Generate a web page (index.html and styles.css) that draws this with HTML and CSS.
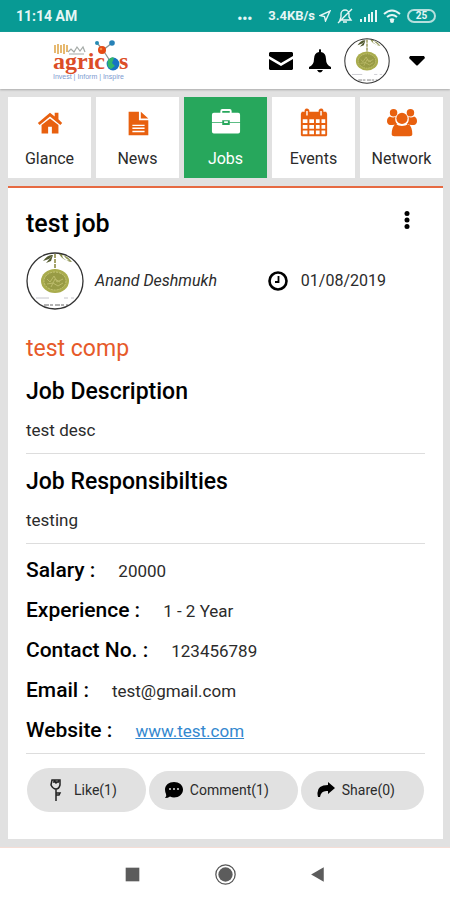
FILE: index.html
```html
<!DOCTYPE html>
<html lang="en">
<head>
<meta charset="utf-8">
<meta name="viewport" content="width=device-width, initial-scale=1">
<title>Agricos - Jobs</title>
<link rel="stylesheet" href="styles.css">
</head>
<body>
<svg class="defs" aria-hidden="true">
  <symbol id="pendant" viewBox="0 0 58 58">
    <clipPath id="round"><circle cx="29" cy="29" r="28"/></clipPath>
    <circle cx="29" cy="29" r="28" fill="#fff"/>
    <g clip-path="url(#round)">
      <path d="M17 9 Q22 2 27 3 L23 7Z M20 11 L27 3 25 9Z" fill="#535a31"/>
      <path d="M33 2 Q38 10 44 8 Q40 8 37 2Z M36 3 Q42 4 46 10 Q42 10 37 6Z" fill="#8b914e"/>
      <path d="M29 2 V18" stroke="#a4a269" stroke-width="2" stroke-dasharray="4 1"/>
      <ellipse cx="29" cy="29" rx="14" ry="12" fill="#a9ac4d"/>
      <ellipse cx="29" cy="29" rx="11" ry="9" fill="#989b45" stroke="#c4c577" stroke-dasharray="2 1"/>
      <path d="M21 27l3 3 4-6 3 6 6-3M21 32l6-1 5 3 5-3M25 35l4-8 5 3" fill="none" stroke="#bdbc6d"/>
      <path d="M10 46h13M38 46h4M45 46h3" stroke="#c4c4ca"/>
      <path d="M18 53h24" stroke="#666" stroke-dasharray="5 1 3 2"/>
    </g>
    <circle cx="29" cy="29" r="28" fill="none" stroke="#333" stroke-width="1.3"/>
  </symbol>
</svg>

<div class="status">
  <span class="clock">11:14 AM</span>
  <span class="dots">•••</span>
  <span class="speed">3.4KB/s</span>
  <svg class="s-loc" viewBox="0 0 12 12"><path d="M11 1 6.5 11 5.5 6.5 1 5.5Z"/></svg>
  <svg class="s-mute" viewBox="0 0 16 16"><path d="M3 12h11l-2-3V6a4 4 0 0 0-8 0v3ZM6 14h4M15 1 1 15"/></svg>
  <svg class="s-signal" viewBox="0 0 18 14"><path d="M1 10h2v3H1zM5 8h2v5H5zM9 5h2v8H9zM12 3h2v10h-2zM16 1h2v12h-2z"/></svg>
  <svg class="s-wifi" viewBox="0 0 18 14"><path d="M1 5Q9-2 17 5M4 8q5-4 10 0M7 11q2-1.5 4 0"/><circle cx="9" cy="12" r="1"/></svg>
  <span class="battery">25</span>
</div>

<header class="top">
  <a class="logo" href="#" aria-label="Agricos">
    <svg viewBox="0 0 76 42">
      <g fill="none" stroke="#e0a94e" stroke-width="1.6"><path d="M2 5v8M5 4v10M8 5v8M11 4v10M14 5v7"/></g>
      <path d="M15 12l3-3 3 3 3-5 3 4 3-4 2 5M16 14h15" fill="none" stroke="#a5aaa7" stroke-width="1.2"/>
      <path d="M44 3l6 7 9-7M50 10l9 14" fill="none" stroke="#8b9694" stroke-width="1.3"/>
      <circle cx="44" cy="3" r="2" fill="#258bb4"/><circle cx="59" cy="3" r="2.8" fill="#2681b7"/>
      <circle cx="49" cy="10" r="4" fill="#e64a13"/><circle cx="48" cy="9" r="1.3" fill="#f3914a"/>
      <text class="word" x="0" y="29">agric</text>
      <text class="word" x="66" y="29">s</text>
      <circle cx="60" cy="24" r="6.4" fill="#1673c3"/>
      <path d="M55 20q4-4 6-2l-2 5 3 3-4 3q-5-2-3-9Z" fill="#32b66b"/>
      <text class="tag" x="0" y="39">Invest | Inform | Inspire</text>
    </svg>
  </a>
  <div class="tools">
    <button aria-label="Messages"><svg class="mail" viewBox="0 0 24 18"><path d="M1 0h22l1 1v3L12 11 0 4V1Zm-1 7 12 7 12-7v10l-1 1H1l-1-1Z"/></svg></button>
    <button aria-label="Notifications"><svg class="bell" viewBox="0 0 22 24"><path d="M10 1q1-2 2 0v2q5 1 5 7 0 6 5 8v2H0v-2q5-2 5-8 0-6 5-7ZM8 21h6q-3 5-6 0Z"/></svg></button>
    <button aria-label="Profile"><svg class="face" viewBox="0 0 58 58"><use href="#pendant"/></svg></button>
    <button aria-label="Account menu"><svg class="caret" viewBox="0 0 16 10"><path d="M1 0h14l1 2-7 7q-1 1-2 0L0 2Z"/></svg></button>
  </div>
</header>

<main>
  <nav class="tabs">
    <a href="#"><svg viewBox="0 0 32 32"><path d="M16 4 3 15l2 2L16 8l11 9 2-2-4-4V4h-4v4ZM16 10 7 17v9h7v-7h4v7h7v-9Z"/></svg>Glance</a>
    <a href="#"><svg viewBox="0 0 32 32"><path d="M6 3h11v9h10v16H6ZM19 3l8 7h-8Z"/><path d="M10 17.500h13M10 20.500h13M10 24h13" stroke="#fff" stroke-width="1.500"/></svg>News</a>
    <a href="#" class="on" aria-current="page"><svg viewBox="0 0 32 32"><path fill-rule="evenodd" d="M3 4h7V2q0-2 2-2h8q2 0 2 2v2h7q2 0 2 2v8H20v-2h-8v2H1V6q0-2 2-2Zm9 0h8V2h-8ZM1 15h11v2h8v-2h11v9q0 2-2 2H3q-2 0-2-2ZM14 13h4v2h-4Z"/></svg>Jobs</a>
    <a href="#"><svg viewBox="0 0 32 32"><path fill-rule="evenodd" d="M3 3h3V1q2-3 5 0v2h10V1q3-3 5 0v2h3l1 2v23l-1 1H3l-1-1V5ZM4 11v4h5v-4Zm7 0v4h5v-4Zm7 0v4h4v-4Zm6 0v4h4v-4ZM4 17v4h5v-4Zm7 0v4h5v-4Zm7 0v4h4v-4Zm6 0v4h4v-4ZM4 23v4h5v-4Zm7 0v4h5v-4Zm7 0v4h4v-4Zm6 0v4h4v-4Z"/><path d="M8.500 2v5M23.500 2v5" stroke="#fff" stroke-width="1.500"/></svg>Events</a>
    <a href="#"><svg viewBox="0 0 32 32"><circle cx="7" cy="4" r="4"/><circle cx="25" cy="4" r="4"/><circle cx="16" cy="10" r="6"/><path d="M3 8q4 2 6 0-1 6 2 8-2 1-8 1-3-1-3-4 0-4 3-5ZM29 8q-4 2-6 0 1 6-2 8 2 1 8 1 3-1 3-4 0-4-3-5ZM9 16q7 4 14 0 4 3 4 11 0 2-3 2H8q-3 0-3-2 0-8 4-11Z"/></svg>Network</a>
  </nav>

  <article class="card">
    <div class="head">
      <h1>test job</h1>
      <button class="more" aria-label="More options"><svg viewBox="0 0 6 20"><circle cx="3" cy="3.500" r="2.500"/><circle cx="3" cy="10" r="2.500"/><circle cx="3" cy="16.500" r="2.500"/></svg></button>
    </div>
    <div class="by">
      <svg class="avatar" viewBox="0 0 58 58"><use href="#pendant"/></svg>
      <em>Anand Deshmukh</em>
      <span class="date"><svg viewBox="0 0 20 20"><circle cx="10" cy="10" r="8.500" fill="none" stroke="#000" stroke-width="2.600"/><path d="M10.500 5v6H7" fill="none" stroke="#000" stroke-width="1.800"/></svg>01/08/2019</span>
    </div>
    <p class="company">test comp</p>
    <section><h2>Job Description</h2><p>test desc</p></section>
    <section><h2>Job Responsibilties</h2><p>testing</p></section>
    <dl>
      <div><dt>Salary :</dt><dd>20000</dd></div>
      <div><dt>Experience :</dt><dd>1 - 2 Year</dd></div>
      <div><dt>Contact No. :</dt><dd>123456789</dd></div>
      <div><dt>Email :</dt><dd>test@gmail.com</dd></div>
      <div><dt>Website :</dt><dd><a href="#">www.test.com</a></dd></div>
    </dl>
    <div class="actions">
      <button class="like"><svg viewBox="0 0 14 24"><path d="M3 2h8v5q-1 4-4 4T2 7ZM4 4h6M5 2l2 3 3-2M7 11v12M7 15h4l-1 2H7" fill="none" stroke="#222" stroke-width="1.500"/></svg>Like(1)</button>
      <button class="comment"><svg viewBox="0 0 18 18"><path d="M9 1c5 0 9 3 9 7.500s-4 8-9 8q-2 0-4-1-2 1.500-5 1.500 2-2 1-4Q0 11 0 8.500C0 4 4 1 9 1Z"/><g fill="#ddd"><circle cx="5" cy="8" r="1"/><circle cx="9" cy="8" r="1"/><circle cx="13" cy="8" r="1"/></g></svg>Comment(1)</button>
      <button class="share"><svg viewBox="0 0 18 18"><path d="m11 1 7 6-7 6v-3Q4 9 3 16H1Q-2 4 11 4Z"/></svg>Share(0)</button>
    </div>
  </article>
</main>

<footer class="sys">
  <button aria-label="Recent apps"><svg viewBox="0 0 20 20"><path d="M3.500 3.500h13v13h-13z"/></svg></button>
  <button aria-label="Home"><svg viewBox="0 0 20 20"><circle cx="10" cy="10" r="9.200" fill="none" stroke="#555" stroke-width="1.200"/><circle cx="10" cy="10" r="6.800"/></svg></button>
  <button aria-label="Back"><svg viewBox="0 0 20 20"><path d="M3 10 15 3v14Z"/></svg></button>
</footer>
</body>
</html>
```
FILE: styles.css
```css
* { box-sizing: border-box; }
body {
  margin: 0;
  min-height: 100vh;
  display: flex;
  flex-direction: column;
  background: #fff;
  color: #2b2b2b;
  font: 16px/24px Roboto, sans-serif;
}
h1, h2, p, dl, dd { margin: 0; }
button { border: 0; padding: 0; background: none; font: inherit; color: inherit; display: flex; align-items: center; }
a { color: inherit; text-decoration: none; }
svg { display: block; flex: none; }
.defs { position: absolute; width: 0; height: 0; }

.status {
  display: flex;
  align-items: center;
  height: 32px;
  padding: 0 14px 0 16px;
  background: #089a94;
  color: #e6f6f5;
  font-size: 14px;
  font-weight: 700;
}
.clock { margin-right: auto; }
.dots { margin-right: 16px; font-size: 14px; padding-top: 6px; }
.speed { font-size: 13px; margin-right: 4px; }
.status svg { fill: none; stroke: #e6f6f5; stroke-width: 1.4; }
.s-loc { width: 12px; height: 12px; margin-right: 6px; }
.s-mute { width: 16px; height: 16px; margin-right: 6px; }
.status .s-signal { width: 18px; height: 14px; margin-right: 6px; fill: #e6f6f5; stroke: none; }
.status .s-wifi { width: 18px; height: 14px; margin-right: 6px; stroke-width: 2; }
.battery {
  width: 29px;
  height: 14px;
  border: 2px solid #b5dfdd;
  border-radius: 7px;
  font-size: 10px;
  line-height: 10px;
  text-align: center;
}

.top {
  display: flex;
  align-items: center;
  justify-content: space-between;
  height: 57px;
  padding: 0 25px 0 53px;
  background: #fff;
  box-shadow: 0 1px 2px #aaa;
  z-index: 1;
}
.logo svg { width: 76px; height: 42px; }
.word { font: bold 24px "Liberation Serif", serif; fill: #dc4d27; }
.tag { font: 7px "Liberation Sans", sans-serif; fill: #7d9bd0; }
.tools { display: flex; align-items: center; gap: 16px; }
.mail { width: 24px; height: 18px; }
.bell { width: 22px; height: 24px; }
.face { width: 46px; height: 46px; margin-left: -3px; }
.caret { width: 16px; height: 10px; margin-left: 3px; }

main { padding: 8px 7px 8px 8px; background: #e1e1e1; border-bottom: 1px solid #f5ddd5; }
.tabs { display: grid; grid-template-columns: repeat(5, 1fr); gap: 5px; margin-bottom: 8px; }
.tabs a {
  display: flex;
  flex-direction: column;
  align-items: center;
  gap: 8px;
  height: 81px;
  padding-top: 12px;
  background: #fff;
}
.tabs svg { width: 30px; height: 30px; fill: #e8600f; overflow: visible; }
.tabs .on { background: #27a75c; color: #fff; }
.tabs .on svg { fill: #fff; }

.card { padding: 20px 18px 27px; border-top: 2px solid #e66a42; background: #fff; }
.head { display: flex; justify-content: space-between; height: 44px; }
h1 { font-size: 25px; line-height: 32px; font-weight: 500; color: #000; }
.more { width: 6px; height: 20px; margin: 2px 15px 0 0; }
.more svg { width: 6px; height: 20px; }
.by { display: flex; align-items: center; margin-bottom: 23px; }
.avatar { width: 58px; height: 58px; margin-right: 11px; }
.date { display: flex; align-items: center; gap: 13px; margin: 0 39px 0 auto; }
.date svg { width: 20px; height: 20px; }
.company { font-size: 23px; line-height: 31px; color: #e65a2a; }
section { padding: 12px 0 11px; border-bottom: 1px solid #ddd; }
h2 { margin-bottom: 10px; font-size: 23px; line-height: 32px; font-weight: 500; color: #000; }
section p, dd { font-size: 17px; }
dl { padding: 6px 0 3px; border-bottom: 1px solid #ddd; }
dl div { display: flex; align-items: baseline; gap: 23px; line-height: 40px; height: 40px; }
dt { font-size: 21px; font-weight: 500; color: #000; }
dd a { color: #3488cf; text-decoration: underline; }

.actions { display: flex; align-items: center; justify-content: center; gap: 3px; padding-top: 14px; }
.actions button { height: 39px; border-radius: 20px; background: #e1e1e1; font-size: 14px; padding: 0 29px 0 16px; gap: 7px; }
.actions svg { width: 18px; height: 18px; }
.actions .like { height: 44px; padding: 0 29px 0 22px; border-radius: 22px; gap: 11px; }
.actions .like svg { width: 14px; height: 24px; }

.sys { flex: 1; min-height: 53px; display: flex; align-items: center; justify-content: center; gap: 72px; }
.sys svg { width: 21px; height: 21px; fill: #5c5c5c; }
```
